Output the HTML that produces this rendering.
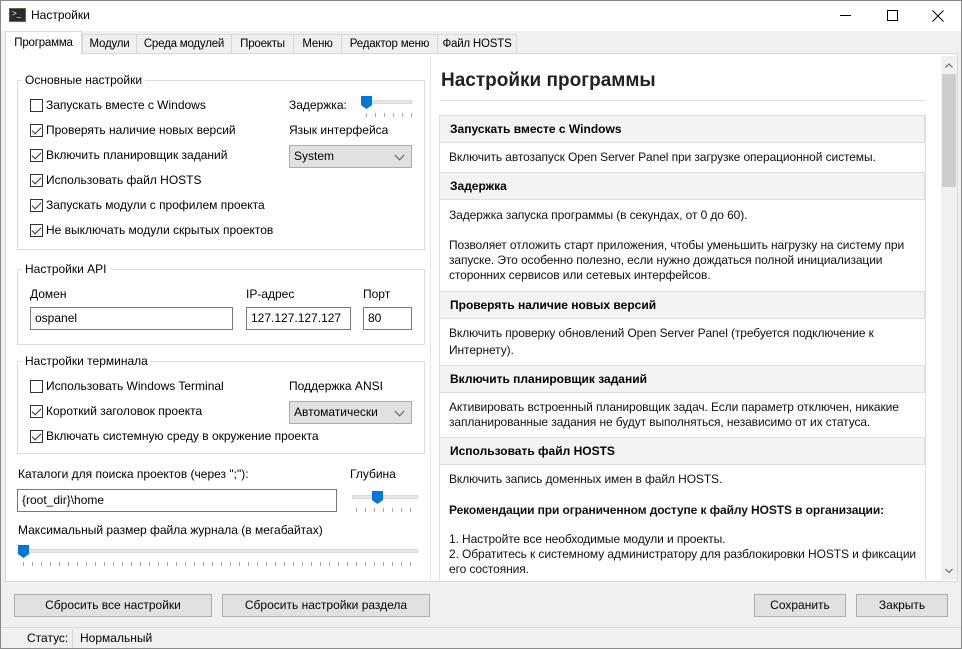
<!DOCTYPE html>
<html><head><meta charset="utf-8"><style>
*{box-sizing:border-box;margin:0;padding:0}
body{width:962px;height:649px;position:relative;overflow:hidden;background:#f0f0f0;font-family:"Liberation Sans",sans-serif;font-size:12px;color:#000}
.a{position:absolute;white-space:nowrap}
.tab{position:absolute;top:34px;height:20px;border:1px solid #d9d9d9;background:#f0f0f0;line-height:18px;text-align:center;font-size:11.5px;letter-spacing:-0.2px}
.grp{position:absolute;border:1px solid #dcdcdc}
.gl{position:absolute;background:#fff;padding:0 3px;font-size:12px;line-height:14px}
.cb{position:absolute;width:13px;height:13px;border:1px solid #333;background:#fff}
.cb.c::after{content:"";position:absolute;left:3px;top:0px;width:4px;height:8px;border:solid #333;border-width:0 1.3px 1.3px 0;transform:rotate(45deg)}
.inp{position:absolute;border:1px solid #7a7a7a;background:#fff;height:23px;line-height:21px;padding-left:4px}
.sel{position:absolute;border:1px solid #adadad;background:#e1e1e1;height:23px;line-height:21px;padding-left:4px}
.sel::after{content:"";position:absolute;right:8px;top:6px;width:6px;height:6px;border:solid #555;border-width:0 1px 1px 0;transform:rotate(45deg)}
.trk{position:absolute;height:4px;background:#e7e7e7;border:1px solid #dadada}
.th{position:absolute;width:11px;height:13px;background:#0078d7;clip-path:polygon(0 0,100% 0,100% 70%,50% 100%,0 70%)}
.ticks{position:absolute;height:4px;background:repeating-linear-gradient(90deg,#aaa 0 1px,transparent 1px 9px)}
.btn{position:absolute;height:23px;border:1px solid #adadad;background:#e1e1e1;text-align:center;line-height:21px}
.sh{position:absolute;left:439px;width:486px;background:#f3f3f3;border:1px solid #dedede;font-weight:bold;padding-left:10px;font-size:12px}
.sb{position:absolute;left:449px;font-size:12px;line-height:15px;color:#111;letter-spacing:-0.1px}
.lb{position:absolute;white-space:nowrap;left:46px}
</style></head><body>
<div class="a" style="left:0;top:0;width:962px;height:31px;background:#fff"></div>
<div class="a" style="left:9px;top:8px;width:17px;height:14px;background:#2b2b2b;border:1px solid #7a5a30"></div>
<div class="a" style="left:12px;top:9px;color:#fff;font-size:8px">&gt;_</div>
<div class="a" style="left:31px;top:8px;font-size:12px">Настройки</div>
<div class="a" style="left:840px;top:15px;width:11px;height:1px;background:#000"></div>
<div class="a" style="left:887px;top:10px;width:11px;height:11px;border:1px solid #000"></div>
<svg class="a" style="left:932px;top:10px" width="12" height="12"><path d="M0.5 0.5L11.5 11.5M11.5 0.5L0.5 11.5" stroke="#000" stroke-width="1"/></svg>

<div class="a" style="left:5px;top:53px;width:953px;height:529px;background:#fff;border:1px solid #d9d9d9"></div>
<div class="tab" style="left:82px;width:55px">Модули</div>
<div class="tab" style="left:136px;width:96px">Среда модулей</div>
<div class="tab" style="left:231px;width:63px">Проекты</div>
<div class="tab" style="left:293px;width:49px">Меню</div>
<div class="tab" style="left:341px;width:97px">Редактор меню</div>
<div class="tab" style="left:437px;width:80px">Файл HOSTS</div>
<div class="tab" style="left:5px;top:31px;width:77px;height:23px;background:#fff;border-bottom:none;line-height:22px">Программа</div>

<div class="grp" style="left:17px;top:80px;width:408px;height:170px"></div>
<div class="gl" style="left:22px;top:73px">Основные настройки</div>
<div class="cb" style="left:30px;top:99px"></div><div class="lb" style="top:98px">Запускать вместе с Windows</div>
<div class="cb c" style="left:30px;top:124px"></div><div class="lb" style="top:123px">Проверять наличие новых версий</div>
<div class="cb c" style="left:30px;top:149px"></div><div class="lb" style="top:148px">Включить планировщик заданий</div>
<div class="cb c" style="left:30px;top:174px"></div><div class="lb" style="top:173px">Использовать файл HOSTS</div>
<div class="cb c" style="left:30px;top:199px"></div><div class="lb" style="top:198px">Запускать модули с профилем проекта</div>
<div class="cb c" style="left:30px;top:224px"></div><div class="lb" style="top:223px">Не выключать модули скрытых проектов</div>
<div class="a" style="left:289px;top:98px">Задержка:</div>
<div class="trk" style="left:362px;top:100px;width:50px"></div>
<div class="th" style="left:361px;top:96px"></div>
<div class="ticks" style="left:366px;top:113px;width:48px"></div>
<div class="a" style="left:289px;top:123px">Язык интерфейса</div>
<div class="sel" style="left:289px;top:145px;width:123px">System</div>

<div class="grp" style="left:17px;top:269px;width:408px;height:76px"></div>
<div class="gl" style="left:22px;top:262px">Настройки API</div>
<div class="a" style="left:30px;top:287px">Домен</div>
<div class="a" style="left:246px;top:287px">IP-адрес</div>
<div class="a" style="left:363px;top:287px">Порт</div>
<div class="inp" style="left:30px;top:307px;width:203px">ospanel</div>
<div class="inp" style="left:246px;top:307px;width:105px">127.127.127.127</div>
<div class="inp" style="left:363px;top:307px;width:49px">80</div>

<div class="grp" style="left:17px;top:361px;width:408px;height:93px"></div>
<div class="gl" style="left:22px;top:354px">Настройки терминала</div>
<div class="cb" style="left:30px;top:380px"></div><div class="lb" style="top:379px">Использовать Windows Terminal</div>
<div class="cb c" style="left:30px;top:405px"></div><div class="lb" style="top:404px">Короткий заголовок проекта</div>
<div class="cb c" style="left:30px;top:430px"></div><div class="lb" style="top:429px">Включать системную среду в окружение проекта</div>
<div class="a" style="left:289px;top:379px">Поддержка ANSI</div>
<div class="sel" style="left:289px;top:401px;width:123px">Автоматически</div>

<div class="a" style="left:18px;top:467px">Каталоги для поиска проектов (через ";"):</div>
<div class="a" style="left:350px;top:467px">Глубина</div>
<div class="inp" style="left:17px;top:489px;width:320px">{root_dir}\home</div>
<div class="trk" style="left:352px;top:495px;width:66px"></div>
<div class="th" style="left:372px;top:491px"></div>
<div class="ticks" style="left:356px;top:508px;width:62px"></div>
<div class="a" style="left:18px;top:523px">Максимальный размер файла журнала (в мегабайтах)</div>
<div class="trk" style="left:18px;top:549px;width:400px"></div>
<div class="th" style="left:18px;top:545px"></div>
<div class="ticks" style="left:23px;top:562px;width:395px"></div>

<div class="a" style="left:430px;top:56px;width:1px;height:524px;background:#e3e3e3"></div>
<div class="a" style="left:941px;top:56px;width:16px;height:524px;background:#f0f0f0"></div>
<div class="a" style="left:942px;top:74px;width:14px;height:113px;background:#cdcdcd"></div>
<svg class="a" style="left:945px;top:63px" width="8" height="6"><path d="M0.5 4.5L4 1L7.5 4.5" stroke="#606060" fill="none"/></svg>
<svg class="a" style="left:945px;top:568px" width="8" height="6"><path d="M0.5 1L4 4.5L7.5 1" stroke="#606060" fill="none"/></svg>
<div class="a" style="left:441px;top:70px;font-size:19px;font-weight:bold;color:#222">Настройки программы</div>
<div class="a" style="left:440px;top:100px;width:485px;height:1px;background:#ddd"></div>

<div class="sh" style="top:115px;height:28px;line-height:26px">Запускать вместе с Windows</div>
<div class="sb" style="top:150px">Включить автозапуск Open Server Panel при загрузке операционной системы.</div>
<div class="sh" style="top:172px;height:28px;line-height:26px">Задержка</div>
<div class="sb" style="top:208px">Задержка запуска программы (в секундах, от 0 до 60).</div>
<div class="sb" style="top:238px">Позволяет отложить старт приложения, чтобы уменьшить нагрузку на систему при<br>запуске. Это особенно полезно, если нужно дождаться полной инициализации<br>сторонних сервисов или сетевых интерфейсов.</div>
<div class="sh" style="top:291px;height:28px;line-height:26px">Проверять наличие новых версий</div>
<div class="sb" style="top:325px;line-height:17px">Включить проверку обновлений Open Server Panel (требуется подключение к<br>Интернету).</div>
<div class="sh" style="top:365px;height:28px;line-height:26px">Включить планировщик заданий</div>
<div class="sb" style="top:400px">Активировать встроенный планировщик задач. Если параметр отключен, никакие<br>запланированные задания не будут выполняться, независимо от их статуса.</div>
<div class="sh" style="top:437px;height:28px;line-height:26px">Использовать файл HOSTS</div>
<div class="sb" style="top:472px">Включить запись доменных имен в файл HOSTS.</div>
<div class="sb" style="top:503px;font-weight:bold">Рекомендации при ограниченном доступе к файлу HOSTS в организации:</div>
<div class="sb" style="top:532px">1. Настройте все необходимые модули и проекты.<br>2. Обратитесь к системному администратору для разблокировки HOSTS и фиксации<br>его состояния.</div>
<div class="a" style="left:925px;top:115px;width:1px;height:465px;background:#dedede"></div>
<div class="a" style="left:439px;top:115px;width:1px;height:465px;background:#dedede"></div>

<div class="btn" style="left:14px;top:594px;width:198px">Сбросить все настройки</div>
<div class="btn" style="left:222px;top:594px;width:208px">Сбросить настройки раздела</div>
<div class="btn" style="left:754px;top:594px;width:92px">Сохранить</div>
<div class="btn" style="left:856px;top:594px;width:92px">Закрыть</div>
<div class="a" style="left:0;top:627px;width:962px;height:1px;background:#dadada"></div>
<div class="a" style="left:27px;top:631px">Статус:</div>
<div class="a" style="left:72px;top:629px;width:1px;height:20px;background:#dadada"></div>
<div class="a" style="left:80px;top:631px">Нормальный</div>
<div class="a" style="left:0;top:0;width:962px;height:649px;border:1px solid #8a8a8a"></div>
</body></html>
